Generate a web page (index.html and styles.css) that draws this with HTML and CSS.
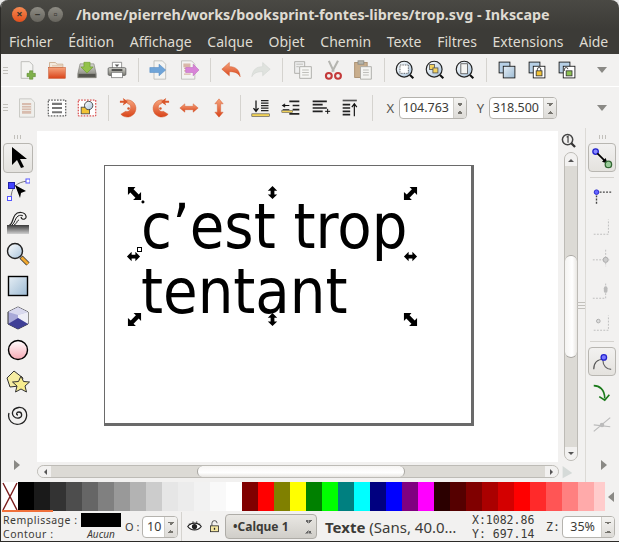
FILE: index.html
```html
<!DOCTYPE html>
<html lang="fr">
    <head>
        <meta charset="UTF-8" />
        <title>trop.svg - Inkscape</title>
        <link rel="stylesheet" href="styles.css">
    </head>
    <body>
        <!-- Shared gradients -->
        <svg class="defs" width="0" height="0">
            <defs>
                <linearGradient id="orange" x1="0" y1="0" x2="0" y2="1"><stop offset="0" stop-color="#f6a47c"/><stop offset="1" stop-color="#d9441a"/></linearGradient>
                <linearGradient id="glass" x1="0" y1="0" x2="1" y2="1"><stop offset="0" stop-color="#fff"/><stop offset="1" stop-color="#a9c4dc"/></linearGradient>
                <linearGradient id="rect" x1="0" y1="0" x2="1" y2="1"><stop offset="0" stop-color="#e6eef5"/><stop offset="1" stop-color="#9dbbd4"/></linearGradient>
                <linearGradient id="pink" x1="0" y1="0" x2="0" y2="1"><stop offset="0" stop-color="#fff"/><stop offset="1" stop-color="#f7a9b4"/></linearGradient>
                <linearGradient id="grey" x1="0" y1="0" x2="0" y2="1"><stop offset="0" stop-color="#3a3a3a"/><stop offset="1" stop-color="#cfcfcf"/></linearGradient>
                <linearGradient id="disk" x1="0" y1="0" x2="0" y2="1"><stop offset="0" stop-color="#d8d8d2"/><stop offset="1" stop-color="#77776f"/></linearGradient>
            </defs>
        </svg>

        <div class="window">
            <!-- Title bar -->
            <div class="titlebar">
                <div class="controls">
                    <span class="ctl ctl-close">×</span>
                    <span class="ctl">–</span>
                    <span class="ctl">▫</span>
                </div>
                <div class="title">/home/pierreh/works/booksprint-fontes-libres/trop.svg - Inkscape</div>
            </div>

            <!-- Menu -->
            <div class="menubar">
                <span>Fichier</span><span>Édition</span><span>Affichage</span><span>Calque</span><span>Objet</span><span>Chemin</span><span>Texte</span><span>Filtres</span><span>Extensions</span><span>Aide</span>
            </div>

            <!-- Command toolbar -->
            <div class="toolbar toolbar-top">
                <span class="grip"></span>
                <span class="btn"><svg viewBox="0 0 24 24"><path d="M5 2h10l4 4v16H5z" fill="#f4f4f2" stroke="#b5b5b0"/><circle cx="17" cy="18" r="5" fill="#fff" opacity=".6"/><path d="M15 13h4v3h3v4h-3v3h-4v-3h-3v-4h3z" fill="#7fb04a" stroke="#5d8a30" stroke-width=".7"/></svg></span>
                <span class="btn"><svg viewBox="0 0 24 24"><path d="M3 6V3h7l2 2h7v4H3z" fill="#f3e9dc" stroke="#c9a98a"/><path d="M6 7h12" stroke="#d9b79c"/><rect x="2" y="9" width="20" height="13" fill="url(#orange)" stroke="#c24a1e" stroke-width=".6"/></svg></span>
                <span class="btn"><svg viewBox="0 0 26 24"><path d="M4 4h18l3 13v5H1v-5z" fill="url(#disk)" stroke="#6d6d66" stroke-width=".7"/><rect x="2" y="17" width="22" height="4" fill="#55554f"/><path d="M9 2h8v6h4l-8 8-8-8h4z" fill="#93c24a" stroke="#6a9a2a" stroke-width=".8"/></svg></span>
                <span class="btn"><svg viewBox="0 0 26 24"><path d="M7 2h12v8H7z" fill="#fff" stroke="#777"/><rect x="1.500" y="9" width="23" height="10" rx="1.500" fill="url(#disk)" stroke="#555"/><rect x="6" y="15" width="14" height="7" fill="#fff" stroke="#777"/><path d="M10 5h6l-3 3z" fill="#555"/><rect x="6" y="11" width="14" height="2" fill="#333"/></svg></span>
                <span class="sep"></span>
                <span class="btn"><svg viewBox="0 0 24 24"><path d="M6 1h10l4 4v18H6z" fill="#f4f4f2" stroke="#b9b9b4"/><path d="M1 9h11V5l8 7-8 7v-4H1z" fill="#6fa4d8" stroke="#4f86c0" stroke-width=".6"/></svg></span>
                <span class="btn"><svg viewBox="0 0 24 24"><path d="M3 1h12l4 4v18H3z" fill="#f4f4f2" stroke="#b9b9b4"/><path d="M6 5h7v3H6zM6 10h7M6 13h5M6 17h8" stroke="#d8b6a6" stroke-width="1.500" fill="#d8b6a6"/><path d="M8 9h9V5l7 7-7 7v-4H8z" fill="#d884d8" stroke="#b95fb9" stroke-width=".6"/></svg></span>
                <span class="sep"></span>
                <span class="btn"><svg viewBox="0 0 24 24"><path d="M1 11 10 3v5c7 0 12 3 13 12-3-5-7-6-13-6v5z" fill="url(#orange)" stroke="#d2562a" stroke-width=".6"/></svg></span>
                <span class="btn"><svg viewBox="0 0 24 24"><path d="M23 11 14 3v5C7 8 2 11 1 20c3-5 7-6 13-6v5z" fill="#dfe2de" stroke="#cfd2ce" stroke-width=".6"/></svg></span>
                <span class="sep"></span>
                <span class="btn"><svg viewBox="0 0 24 24"><path d="M2 2h12v14H2z" fill="#eee" stroke="#a5a5a0"/><path d="M8 8h14v14H8z" fill="#f6f6f4" stroke="#a5a5a0"/><path d="M11 12h8M11 15h8M11 18h8" stroke="#b5b5b0"/><path d="M4 5h8M4 8h3" stroke="#b5b5b0"/></svg></span>
                <span class="btn"><svg viewBox="0 0 24 24"><path d="M7 1l6 13M18 1l-7 13" stroke="#b5b5b0" stroke-width="2.500" fill="none"/><circle cx="7" cy="19" r="3.500" fill="none" stroke="#c43a3a" stroke-width="2.500"/><circle cx="18" cy="19" r="3.500" fill="none" stroke="#c43a3a" stroke-width="2.500"/></svg></span>
                <span class="btn"><svg viewBox="0 0 24 24"><rect x="2" y="3" width="15" height="18" fill="#c9ae8d" stroke="#a58a6a"/><rect x="6" y="1" width="7" height="4" fill="#b8b8b0" stroke="#8a8a84"/><path d="M9 8h13v15H9z" fill="#f4f4f2" stroke="#a5a5a0"/><path d="M12 12h7M12 15h7M12 18h7" stroke="#b5b5b0"/></svg></span>
                <span class="sep"></span>
                <span class="btn"><svg viewBox="0 0 24 24"><circle cx="11" cy="11" r="9.500" fill="url(#glass)" stroke="#222" stroke-width="1.400"/><rect x="6" y="6" width="10" height="10" fill="#fff" stroke="#333" stroke-dasharray="1 1"/><path d="M18 18l4 4" stroke="#111" stroke-width="2.500"/></svg></span>
                <span class="btn"><svg viewBox="0 0 24 24"><circle cx="11" cy="11" r="9.500" fill="url(#glass)" stroke="#222" stroke-width="1.400"/><rect x="5.500" y="5.500" width="6" height="6" fill="#f4d35e" stroke="#555"/><rect x="9.500" y="9.500" width="6" height="6" fill="#f4d35e" stroke="#555"/><path d="M18 18l4 4" stroke="#111" stroke-width="2.500"/></svg></span>
                <span class="btn"><svg viewBox="0 0 24 24"><circle cx="11" cy="11" r="9.500" fill="url(#glass)" stroke="#222" stroke-width="1.400"/><rect x="7" y="4.500" width="8" height="12" fill="#f4f4f2" stroke="#555"/><path d="M18 18l4 4" stroke="#111" stroke-width="2.500"/></svg></span>
                <span class="sep"></span>
                <span class="btn"><svg viewBox="0 0 24 24"><rect x="2.500" y="2.500" width="13" height="13" fill="#b7d0e6" stroke="#111"/><rect x="7.500" y="7.500" width="14" height="14" fill="url(#rect)" stroke="#111"/></svg></span>
                <span class="btn"><svg viewBox="0 0 24 24"><rect x="2.500" y="2.500" width="13" height="13" fill="#b7d0e6" stroke="#111"/><rect x="7.500" y="7.500" width="14" height="14" fill="#fff" stroke="#111"/><rect x="11" y="13" width="7" height="6" fill="#f2c335" stroke="#333"/><path d="M12.500 13v-2a2 2 0 0 1 4 0v2" fill="none" stroke="#333"/></svg></span>
                <span class="btn"><svg viewBox="0 0 24 24"><rect x="2.500" y="2.500" width="13" height="13" fill="#b7d0e6" stroke="#111"/><rect x="7.500" y="7.500" width="14" height="14" fill="#fff" stroke="#111"/><rect x="11" y="13" width="7" height="6" fill="#8cc152" stroke="#333"/><path d="M9 13v-2a2 2 0 0 1 4 0" fill="none" stroke="#333"/></svg></span>
                <span class="more"></span>
            </div>

            <!-- Text tool controls -->
            <div class="toolbar toolbar-align">
                <span class="grip"></span>
                <span class="btn"><svg viewBox="0 0 24 24"><path d="M3 1h14l4 4v18H3z" fill="#efefec" stroke="#c3c3be"/><path d="M6 6h11v13H6z" fill="#d8bcae"/><path d="M6 9h11M6 12h11M6 15h11" stroke="#efefec"/></svg></span>
                <span class="btn"><svg viewBox="0 0 24 24"><rect x="1.500" y="2.500" width="21" height="19" fill="#fff" stroke="#111" stroke-dasharray="2 1.500"/><path d="M6 7h12M6 12h12M6 17h12" stroke="#777" stroke-width="2.500"/></svg></span>
                <span class="btn"><svg viewBox="0 0 24 24"><rect x="1.500" y="2.500" width="21" height="19" fill="#fff" stroke="#c00" stroke-dasharray="2 1.500"/><rect x="5" y="11" width="10" height="8" fill="#f2c335" stroke="#444"/><circle cx="14" cy="9" r="5" fill="url(#glass)" stroke="#333"/></svg></span>
                <span class="sep sep-tall"></span>
                <span class="btn btn-big"><svg viewBox="0 0 24 24"><path d="M5 2l6 4-6 4 1-3H2V5h4z" fill="#d9562a"/><path d="M9 4a9 9 0 1 1-6 15l5-3a4 4 0 1 0 2-8z" fill="url(#orange)" stroke="#d2562a" stroke-width=".5"/><circle cx="11" cy="13" r="1.300" fill="#d2562a"/></svg></span>
                <span class="btn btn-big"><svg viewBox="0 0 24 24"><path d="M19 2l-6 4 6 4-1-3h4V5h-4z" fill="#d9562a"/><path d="M15 4a9 9 0 1 0 6 15l-5-3a4 4 0 1 1-2-8z" fill="url(#orange)" stroke="#d2562a" stroke-width=".5"/><circle cx="13" cy="13" r="1.300" fill="#d2562a"/></svg></span>
                <span class="btn"><svg viewBox="0 0 24 24"><path d="M1 12l6-5v3h10V7l6 5-6 5v-3H7v3z" fill="url(#orange)" stroke="#d2562a" stroke-width=".5"/></svg></span>
                <span class="btn"><svg viewBox="0 0 24 24"><path d="M12 1l5 6h-3v10h3l-5 6-5-6h3V7H7z" fill="url(#orange)" stroke="#d2562a" stroke-width=".5"/></svg></span>
                <span class="sep sep-tall"></span>
                <span class="btn"><svg viewBox="0 0 24 24"><path d="M6 3v12M3 12l3 4 3-4" stroke="#111" stroke-width="1.500" fill="none"/><path d="M12 3h9M12 6h9M12 9h9M12 12h9M12 15h9" stroke="#222" stroke-width="1.500"/><rect x="1" y="19" width="21" height="3" fill="#f2d35a" stroke="#444" stroke-width=".7"/></svg></span>
                <span class="btn"><svg viewBox="0 0 24 24"><path d="M2 9h8M2 14h8M5 7L2 9l3 2" stroke="#111" stroke-width="1.300" fill="none"/><path d="M10 4h12M14 9h8M14 14h8M10 19h12" stroke="#222" stroke-width="2"/><rect x="1" y="15" width="13" height="2.500" fill="#f2d35a" stroke="#444" stroke-width=".6"/></svg></span>
                <span class="btn"><svg viewBox="0 0 24 24"><path d="M2 4h17M2 8h12M2 12h17M2 16h12" stroke="#222" stroke-width="2"/><path d="M17 16h6M20 13v6" stroke="#111" stroke-width="1.200"/></svg></span>
                <span class="btn"><svg viewBox="0 0 24 24"><rect x="2" y="2" width="17" height="2" fill="#555"/><path d="M2 8h9M2 12h9M2 16h9M2 20h9" stroke="#222" stroke-width="2"/><path d="M16 22V8M13 11l3-4 3 4" stroke="#111" stroke-width="1.400" fill="none"/></svg></span>
                <span class="sep sep-tall"></span>
                <label class="coord-label">X</label>
                <span class="spin spin-x"><span class="spin-value">104.763</span><span class="spin-arrows"></span></span>
                <label class="coord-label coord-label-y">Y</label>
                <span class="spin spin-y"><span class="spin-value">318.500</span><span class="spin-arrows"></span></span>
                <span class="more"></span>
            </div>

            <!-- Work area -->
            <div class="workspace">
                <div class="toolbox">
                    <span class="grip-h"></span>
                    <span class="tool tool-on"><svg viewBox="0 0 24 24"><path d="M6 1v18l5-5 4 8 3-1-4-8h7z" fill="#000"/></svg></span>
                    <span class="tool"><svg viewBox="0 0 24 24"><path d="M5 21C5 10 10 4 22 3" fill="none" stroke="#777"/><rect x="1.500" y="18.500" width="4" height="4" fill="#fff" stroke="#55f"/><rect x="20" y="1" width="4" height="4" fill="#fff" stroke="#55f"/><rect x="2.500" y="4.500" width="6" height="6" fill="#44f" stroke="#22a"/><path d="M9 7l11 6-5 2-1 5z" fill="#000"/></svg></span>
                    <span class="tool"><svg viewBox="0 0 24 24"><path d="M2 16c5-1 4-7 7-11 3-4 10-3 11 1 1 3-4 5-5 1" fill="none" stroke="#222" stroke-width="1.200"/><path d="M6 15c3-2 3-7 6-9 2-1 4-1 5 0" fill="none" stroke="#222"/><path d="M8 15c4-2 2-4 5-5" fill="none" stroke="#222"/><path d="M1 15h22v9H1z" fill="url(#grey)"/></svg></span>
                    <span class="tool"><svg viewBox="0 0 24 24"><circle cx="9" cy="9" r="7.500" fill="url(#glass)" stroke="#222" stroke-width="1.400"/><path d="M15 15l7 7" stroke="#333" stroke-width="4.500"/><path d="M15.500 15.500l6.500 6.500" stroke="#f0a830" stroke-width="3"/></svg></span>
                    <span class="tool"><svg viewBox="0 0 24 24"><rect x="2.500" y="2.500" width="19" height="19" fill="url(#rect)" stroke="#000" stroke-width="1.400"/></svg></span>
                    <span class="tool"><svg viewBox="0 0 24 24"><path d="M12 1l10 5v12l-10 5-10-5V6z" fill="#a9a9d8" stroke="#333"/><path d="M2 6l10-5 10 5-10 3z" fill="#d9d9ee"/><path d="M12 9l10-3v12l-10-6z" fill="#eeeef7"/><path d="M12 12l10 6-10 5-10-5z" fill="#3f3f96"/></svg></span>
                    <span class="tool"><svg viewBox="0 0 24 24"><circle cx="12" cy="12" r="9.500" fill="url(#pink)" stroke="#000" stroke-width="1.400"/></svg></span>
                    <span class="tool"><svg viewBox="0 0 24 24"><path d="M8 1L1 8l3 9 9-1 4-8z" fill="#f6eda2" stroke="#333"/><path d="M15 6l2.500 5.500 6 .5-4.500 4 1.500 6-5.500-3-5.500 3 1.500-6-4.500-4 6-.5z" fill="#f7ec8e" stroke="#333"/></svg></span>
                    <span class="tool"><svg viewBox="0 0 24 24"><path d="M12 13c-2 0-2-3 1-3s4 5 0 6-8-3-6-7 9-5 12-1 2 12-5 14-13-4-11-11" fill="none" stroke="#222" stroke-width="1.300"/></svg></span>
                    <span class="tool-more"></span>
                </div>

                <div class="center">
                    <div class="center-top">
                        <div class="canvas">
                            <div class="page">
                                <div class="drawing">c’est trop<br />tentant</div>
                                <!-- Selection handles -->
                                <svg class="handle h-tl" viewBox="0 0 16 16"><path d="M1 1h8L7 3.500 12.500 9 15 6.500V15H6.500L9 12.500 3.500 7 1 9.500zM17 15l2 2-2 2-2-2z"/></svg>
                                <svg class="handle h-t" viewBox="0 0 16 16"><path d="M8 1l5 5h-3v4h3l-5 5-5-5h3V6H3z"/></svg>
                                <svg class="handle h-tr" viewBox="0 0 16 16"><path d="M15 1H7l2.500 2.500L4 9 1 6.500V15h8.500L7 12.500 12.500 7l2.500 2.500z"/></svg>
                                <svg class="handle h-l" viewBox="0 0 16 16"><path d="M1 8l5-5v3h4V3l5 5-5 5v-3H6v3z"/></svg>
                                <svg class="handle h-r" viewBox="0 0 16 16"><path d="M1 8l5-5v3h4V3l5 5-5 5v-3H6v3z"/></svg>
                                <svg class="handle h-bl" viewBox="0 0 16 16"><path d="M15 1H7l2.500 2.500L4 9 1 6.500V15h8.500L7 12.500 12.500 7l2.500 2.500z"/></svg>
                                <svg class="handle h-b" viewBox="0 0 16 16"><path d="M8 1l5 5h-3v4h3l-5 5-5-5h3V6H3z"/></svg>
                                <svg class="handle h-br" viewBox="0 0 16 16"><path d="M1 1h8L7 3.500 12.500 9 15 6.500V15H6.500L9 12.500 3.500 7 1 9.500z"/></svg>
                                <span class="origin"></span>
                            </div>
                        </div>
                        <div class="vside">
                            <svg class="zoom-one" viewBox="0 0 16 16"><circle cx="7" cy="7" r="5.500" fill="#f2f1f0" stroke="#444" stroke-width="1.600"/><path d="M6 4.500l1.500-1v7" fill="none" stroke="#444" stroke-width="1.300"/><path d="M11 11l4 4" stroke="#333" stroke-width="2.400"/></svg>
                            <div class="vscroll">
                                <span class="step step-up"></span>
                                <div class="vtrack"><span class="vthumb"></span></div>
                                <span class="step step-down"></span>
                            </div>
                        </div>
                        <span class="grip-v"></span>
                    </div>
                    <div class="center-bottom">
                        <div class="hscroll">
                            <span class="step step-left"></span>
                            <div class="htrack"><span class="hthumb"></span></div>
                            <span class="step step-right"></span>
                        </div>
                        <svg class="cms" viewBox="0 0 16 16"><path d="M3 1l11 8-11 6z" fill="#d5dad8"/></svg>
                    </div>
                </div>

                <div class="snapbar">
                    <span class="grip-h"></span>
                    <span class="snap snap-on"><svg viewBox="0 0 24 24"><circle cx="5" cy="5" r="3" fill="#88f" stroke="#22c" stroke-width="1.400"/><path d="M7 7l9 9" stroke="#000" stroke-width="1.800"/><path d="M18 18l-6-2 4-4z"/><circle cx="19" cy="19" r="3.500" fill="#9c9" stroke="#363" stroke-width="1.400"/></svg></span>
                    <span class="rule"></span>
                    <span class="snap"><svg viewBox="0 0 24 24"><path d="M6 10h16M6 10v14" stroke="#444" stroke-width="1.500" stroke-dasharray="2 1.500"/><circle cx="6" cy="10" r="2.500" fill="#66f" stroke="#22c"/></svg></span>
                    <span class="snap"><svg viewBox="0 0 24 24"><path d="M3 21h16V5" fill="none" stroke="#bbb" stroke-dasharray="2 1.500"/></svg></span>
                    <span class="snap"><svg viewBox="0 0 24 24"><path d="M2 14h18M16 3v18" stroke="#bbb" stroke-dasharray="2 1.500"/><circle cx="16" cy="14" r="2.800" fill="#ccc" stroke="#aaa"/></svg></span>
                    <span class="snap"><svg viewBox="0 0 24 24"><path d="M2 21h14V4" fill="none" stroke="#bbb" stroke-dasharray="2 1.500"/><rect x="14" y="8" width="4" height="7" rx="2" fill="#bbb"/></svg></span>
                    <span class="snap"><svg viewBox="0 0 24 24"><path d="M3 21h16V5" fill="none" stroke="#bbb" stroke-dasharray="2 1.500"/><circle cx="8" cy="11" r="2" fill="#ddd" stroke="#aaa"/></svg></span>
                    <span class="rule rule-low"></span>
                    <span class="snap snap-on"><svg viewBox="0 0 24 24"><path d="M3 20C3 12 8 9 14 9" fill="none" stroke="#555" stroke-width="1.300"/><path d="M13 10c0 6 4 10 9 10" fill="none" stroke="#666" stroke-width="1.300"/><circle cx="14" cy="7" r="3" fill="#77f" stroke="#22c" stroke-width="1.400"/></svg></span>
                    <span class="snap"><svg viewBox="0 0 24 24"><path d="M3 5c6 0 12 4 12 14" fill="none" stroke="#1a7a1a" stroke-width="1.800"/><path d="M9 17l6 4 5-6" fill="none" stroke="#1a7a1a" stroke-width="1.800"/></svg></span>
                    <span class="snap"><svg viewBox="0 0 24 24"><path d="M3 20L21 5M3 13l18 2" fill="none" stroke="#bbb" stroke-width="1.300"/><circle cx="12" cy="13" r="2.500" fill="#bbb"/></svg></span>
                    <span class="tool-more tool-more-right"></span>
                </div>
            </div>

            <!-- Palette -->
            <div class="palette">
                <span class="swatch swatch-none"><svg viewBox="0 0 16 30" preserveAspectRatio="none"><path d="M1 1l14 28M15 1L1 29" stroke="#7a1c1c" stroke-width="1.400"/></svg></span>
                <span class="swatch" style="background:#000"></span>
                <span class="swatch" style="background:#1a1a1a"></span>
                <span class="swatch" style="background:#333"></span>
                <span class="swatch" style="background:#4d4d4d"></span>
                <span class="swatch" style="background:#666"></span>
                <span class="swatch" style="background:#808080"></span>
                <span class="swatch" style="background:#999"></span>
                <span class="swatch" style="background:#b3b3b3"></span>
                <span class="swatch" style="background:#ccc"></span>
                <span class="swatch" style="background:#e6e6e6"></span>
                <span class="swatch" style="background:#ececec"></span>
                <span class="swatch" style="background:#f2f2f2"></span>
                <span class="swatch" style="background:#f9f9f9"></span>
                <span class="swatch" style="background:#fff"></span>
                <span class="swatch" style="background:#800000"></span>
                <span class="swatch" style="background:#f00"></span>
                <span class="swatch" style="background:#808000"></span>
                <span class="swatch" style="background:#ff0"></span>
                <span class="swatch" style="background:#008000"></span>
                <span class="swatch" style="background:#0f0"></span>
                <span class="swatch" style="background:#008080"></span>
                <span class="swatch" style="background:#0ff"></span>
                <span class="swatch" style="background:#000080"></span>
                <span class="swatch" style="background:#00f"></span>
                <span class="swatch" style="background:#800080"></span>
                <span class="swatch" style="background:#f0f"></span>
                <span class="swatch" style="background:#2b0000"></span>
                <span class="swatch" style="background:#500"></span>
                <span class="swatch" style="background:#800000"></span>
                <span class="swatch" style="background:#a00"></span>
                <span class="swatch" style="background:#d40000"></span>
                <span class="swatch" style="background:#f00"></span>
                <span class="swatch" style="background:#ff2a2a"></span>
                <span class="swatch" style="background:#f55"></span>
                <span class="swatch" style="background:#ff8080"></span>
                <span class="swatch" style="background:#faa"></span>
                <span class="swatch swatch-last" style="background:#fcc"></span>
                <span class="palette-menu"></span>
            </div>

            <!-- Status bar -->
            <div class="statusbar">
                <div class="fillstroke">
                    <span class="fs-label">Remplissage :</span>
                    <span class="fs-fill"></span>
                    <span class="fs-label">Contour :</span>
                    <span class="fs-none">Aucun</span>
                </div>
                <span class="opacity-label">O :</span>
                <span class="spin spin-o"><span class="spin-value">10</span><span class="spin-arrows"></span></span>
                <span class="divider"></span>
                <svg class="status-icon" viewBox="0 0 20 16"><path d="M1 8c4-6 14-6 18 0-4 6-14 6-18 0z" fill="#fff" stroke="#222" stroke-width="1.500"/><circle cx="10" cy="8" r="3.500" fill="#222"/><path d="M3 4l2 2M8 1v3M13 1v3M17 4l-2 2" stroke="#222"/></svg>
                <svg class="status-icon status-lock" viewBox="0 0 20 20"><rect x="4" y="9" width="12" height="9" fill="#f4e6a0" stroke="#222" stroke-width="1.200"/><path d="M6 9V5a4 4 0 0 1 8 0" fill="none" stroke="#444" stroke-width="1.400"/><rect x="9" y="12" width="2" height="3" fill="#222"/></svg>
                <span class="layer">•Calque 1<span class="layer-arrows"></span></span>
                <span class="status-text"><b>Texte</b> (Sans, 40.0…</span>
                <span class="coords"><span>X:1082.86</span><span>Y: 697.14</span></span>
                <span class="zoom-label">Z:</span>
                <span class="spin spin-z"><span class="spin-value">35%</span><span class="spin-arrows"></span></span>
            </div>
        </div>
    </body>
</html>
```

FILE: styles.css
```css
* {
    margin: 0;
    padding: 0;
    box-sizing: border-box;
}
html, body {
    width: 619px;
    height: 542px;
    overflow: hidden;
    background: #e8e8e8;
}
body {
    font-family: "Noto Sans", sans-serif;
    color: #3c3b37;
}
.defs {
    display: block;
    position: absolute;
}
svg {
    display: block;
}
.window {
    width: 619px;
    height: 542px;
    display: flex;
    flex-direction: column;
    background-color: #f2f1f0;
    border-left: 1px solid #2c2b28;
    border-bottom: 1px solid #2c2b28;
    border-radius: 8px 8px 0 0;
    overflow: hidden;
}
/* Title bar */
.titlebar {
    height: 29px;
    flex: none;
    display: flex;
    align-items: center;
    background: linear-gradient(#4a4944, #3c3b37);
    padding-left: 11px;
}
.controls {
    display: flex;
    gap: 3px;
    width: 64px;
}
.ctl {
    width: 15px;
    height: 15px;
    border-radius: 50%;
    background: linear-gradient(#8e8c84, #66645d);
    color: #36352f;
    font-size: 11px;
    line-height: 14px;
    text-align: center;
    font-weight: 700;
}
.ctl-close {
    background: linear-gradient(#f58a52, #e2501d);
}
.title {
    color: #dfdbd2;
    font-size: 14.300px;
    font-weight: 700;
    white-space: nowrap;
}
/* Menu */
.menubar {
    height: 25px;
    flex: none;
    display: flex;
    align-items: center;
    gap: 15.700px;
    padding-left: 8px;
    background-color: #3c3b37;
    color: #dfdbd2;
    font-size: 14px;
    white-space: nowrap;
}
/* Toolbars */
.toolbar {
    flex: none;
    display: flex;
    align-items: center;
    padding-left: 2px;
}
.toolbar-top {
    height: 33px;
    border-bottom: 1px solid #fff;
}
.toolbar-align {
    height: 41px;
}
.grip {
    width: 5px;
    height: 7px;
    margin-right: 4px;
    flex: none;
    background: repeating-linear-gradient(#c2c0bb 0 1px, transparent 1px 3px);
}
.btn {
    width: 30px;
    height: 24px;
    display: flex;
    align-items: center;
    justify-content: center;
}
.btn svg {
    width: 20px;
    height: 20px;
}
.btn-big svg {
    width: 23px;
    height: 23px;
}
.sep {
    width: 12px;
    height: 24px;
    background: linear-gradient(#d5d3cf, #d5d3cf) center / 1px 100% no-repeat;
}
.sep-tall {
    height: 26px;
}
.more {
    width: 0;
    height: 0;
    margin-left: auto;
    margin-right: 12px;
    border-left: 5px solid transparent;
    border-right: 5px solid transparent;
    border-top: 6px solid #8a8985;
}
.coord-label {
    width: 18px;
    text-align: right;
    padding-right: 2px;
    font-size: 13px;
    color: #55534e;
}
.coord-label-y {
    width: 19px;
}
/* Spin boxes */
.spin {
    display: flex;
    height: 22px;
    border: 1px solid #b5b3ae;
    border-radius: 4px;
    background-color: #fff;
    overflow: hidden;
    margin-left: 3px;
    font-size: 12.500px;
}
.spin-x, .spin-y {
    width: 68px;
}
.spin-value {
    flex: 1;
    text-align: right;
    padding-right: 4px;
    line-height: 20px;
    white-space: nowrap;
    overflow: hidden;
}
.spin-arrows {
    width: 13px;
    flex: none;
    border-left: 1px solid #cfcdc8;
    background:
        linear-gradient(45deg, transparent 50%, #77756f 50%) 3px 5px / 3px 3px no-repeat,
        linear-gradient(-45deg, transparent 50%, #77756f 50%) 6px 5px / 3px 3px no-repeat,
        linear-gradient(135deg, transparent 50%, #77756f 50%) 3px 13px / 3px 3px no-repeat,
        linear-gradient(-135deg, transparent 50%, #77756f 50%) 6px 13px / 3px 3px no-repeat,
        linear-gradient(#f4f3f1, #dddbd7);
}
/* Work area */
.workspace {
    height: 354px;
    flex: none;
    display: flex;
}
.toolbox {
    width: 36px;
    flex: none;
    display: flex;
    flex-direction: column;
    align-items: flex-start;
    padding: 7px 0 0 2px;
}
.grip-h {
    width: 8px;
    height: 4px;
    margin: 0 0 4px 11px;
    flex: none;
    background: repeating-linear-gradient(90deg, #c2c0bb 0 1px, transparent 1px 3px);
}
.tool {
    width: 30px;
    height: 32px;
    flex: none;
    display: flex;
    align-items: center;
    justify-content: center;
}
.tool svg {
    width: 24px;
    height: 24px;
}
.tool-on {
    height: 30px;
    margin-bottom: 1px;
    background: linear-gradient(#f2f1f0, #e4e2de);
    border: 1px solid #b8b6b1;
    border-radius: 4px;
}
.tool-more {
    width: 0;
    height: 0;
    margin: auto 0 12px 11px;
    border-top: 5px solid transparent;
    border-bottom: 5px solid transparent;
    border-left: 6px solid #8a8985;
}
.tool-more-right {
    margin: auto 0 12px 13px;
}
.center {
    width: 548px;
    flex: none;
    display: flex;
    flex-direction: column;
    padding-top: 3px;
}
.center-top {
    height: 331px;
    flex: none;
    display: flex;
}
.canvas {
    width: 521px;
    flex: none;
    background-color: #fff;
    padding: 34px 0 0 67px;
}
.page {
    position: relative;
    width: 370px;
    height: 261px;
    border: 1px solid #6a6a6a;
    border-right-width: 3px;
    border-bottom-width: 3px;
    padding: 28px 0 0 36px;
    background-color: #fff;
}
.drawing {
    font-family: "DejaVu Sans", sans-serif;
    font-stretch: condensed;
    color: #000;
    font-size: 62.500px;
    line-height: 65px;
    white-space: nowrap;
}
.handle {
    position: absolute;
    width: 15px;
    height: 15px;
    fill: #000;
    overflow: visible;
}
.h-tl { left: 22px; top: 20px; }
.h-t { left: 160px; top: 19px; }
.h-tr { left: 298px; top: 20px; }
.h-l { left: 21px; top: 83px; }
.h-r { left: 298px; top: 83px; }
.h-bl { left: 22px; top: 146px; }
.h-b { left: 160px; top: 146px; }
.h-br { left: 298px; top: 146px; }
.origin {
    position: absolute;
    left: 32px;
    top: 81px;
    width: 5px;
    height: 5px;
    border: 1px solid #000;
    background-color: #fff;
}
.vside {
    width: 19px;
    flex: none;
    display: flex;
    flex-direction: column;
    align-items: center;
    padding-top: 2px;
}
.zoom-one {
    width: 15px;
    height: 15px;
    margin-bottom: 4px;
    margin-left: 2px;
}
.vscroll, .hscroll {
    display: flex;
    background-color: #dcdad5;
    border: 1px solid #bdbbb6;
    overflow: hidden;
}
.vscroll {
    margin-left: 6px;
    width: 14px;
    height: 309px;
    flex: none;
    flex-direction: column;
    border-radius: 7px;
}
.vtrack {
    flex: 1;
    padding-top: 89px;
}
.vthumb {
    display: block;
    height: 103px;
    background: linear-gradient(90deg, #f4f3f1, #fff 60%, #e8e6e2);
    border: 1px solid #a8a6a1;
    border-width: 1px 0;
    border-radius: 6px;
}
.step {
    flex: none;
    background-color: #f2f1f0;
    display: block;
    position: relative;
}
.step-up, .step-down {
    height: 13px;
}
.step::after {
    content: "";
    position: absolute;
    left: 50%;
    top: 50%;
    width: 0;
    height: 0;
    transform: translate(-50%, -50%);
    border: 3px solid transparent;
}
.step-up::after { border-bottom-color: #555; margin-top: -1px; }
.step-down::after { border-top-color: #555; margin-top: 1px; }
.step-left::after { border-right-color: #555; margin-left: -1px; }
.step-right::after { border-left-color: #555; margin-left: 1px; }
.grip-v {
    width: 8px;
    height: 8px;
    margin: 171px 0 0 0;
    flex: none;
    background: repeating-linear-gradient(#c2c0bb 0 1px, transparent 1px 3px);
}
.center-bottom {
    flex: 1;
    display: flex;
    align-items: flex-start;
    padding-top: 3px;
}
.hscroll {
    width: 522px;
    height: 13px;
    border-radius: 7px;
}
.step-left, .step-right {
    width: 13px;
}
.htrack {
    flex: 1;
    padding-left: 146px;
}
.hthumb {
    display: block;
    width: 208px;
    height: 100%;
    background: linear-gradient(#f6f5f3, #fff 60%, #e8e6e2);
    border: 1px solid #a8a6a1;
    border-width: 0 1px;
    border-radius: 6px;
}
.cms {
    width: 14px;
    height: 14px;
    margin-left: 1px;
}
.snapbar {
    flex: 1;
    display: flex;
    flex-direction: column;
    align-items: flex-start;
    border-left: 1px solid #dcdad6;
    padding: 7px 0 0 2px;
}
.snap {
    width: 28px;
    height: 32px;
    flex: none;
    display: flex;
    align-items: center;
    justify-content: center;
}
.snap svg {
    width: 22px;
    height: 22px;
}
.snap-on {
    height: 29px;
    background: linear-gradient(#f2f1f0, #e4e2de);
    border: 1px solid #b8b6b1;
    border-radius: 4px;
}
.rule {
    width: 24px;
    height: 1px;
    flex: none;
    margin: 5px 0 0 2px;
    background-color: #d5d3cf;
}
.rule-low {
    margin: 3px 0 5px 2px;
}
/* Palette */
.palette {
    height: 30px;
    flex: none;
    display: flex;
    padding-left: 1px;
}
.swatch {
    width: 16px;
    height: 29px;
    flex: none;
    display: block;
}
.swatch svg {
    width: 16px;
    height: 29px;
}
.swatch-none {
    position: relative;
    background-color: #fff;
}
.swatch-none::after {
    content: "";
    position: absolute;
    left: 0;
    top: 28px;
    width: 51px;
    height: 2px;
    background-color: #f0703a;
}
.swatch-last {
    width: 11px;
}
.palette-menu {
    width: 0;
    height: 0;
    margin: 10px 0 0 3px;
    border-top: 5px solid transparent;
    border-bottom: 5px solid transparent;
    border-right: 6px solid #8a8985;
}
/* Status bar */
.statusbar {
    flex: 1;
    min-height: 0;
    display: flex;
    align-items: center;
}
.fillstroke {
    width: 121px;
    flex: none;
    display: grid;
    grid-template-columns: 78px 40px;
    grid-template-rows: 14px 14px;
    padding-left: 2px;
    font-size: 10.500px;
    line-height: 14px;
    white-space: nowrap;
}
.fs-label {
    letter-spacing: .5px;
}
.fs-fill {
    background-color: #000;
}
.fs-none {
    font-style: italic;
    text-align: center;
    font-size: 10px;
}
.opacity-label {
    font-size: 11px;
    width: 17px;
    margin-left: 3px;
    white-space: nowrap;
}
.spin-o {
    width: 36px;
    margin-left: 0;
}
.spin-o .spin-value {
    text-align: left;
    padding: 0 0 0 4px;
}
.divider {
    width: 1px;
    height: 29px;
    margin: 0 5px 0 3px;
    background-color: #d5d3cf;
}
.status-icon {
    width: 15px;
    height: 13px;
    margin-right: 5px;
}
.status-lock {
    margin-right: 3px;
}
.layer {
    position: relative;
    width: 92px;
    height: 25px;
    padding-left: 7px;
    font-size: 12px;
    font-weight: 700;
    line-height: 24px;
    background: linear-gradient(#e9e7e3, #d0cec9);
    border: 1px solid #aeaca7;
    border-radius: 4px;
    white-space: nowrap;
}
.layer-arrows {
    position: absolute;
    right: 4px;
    top: 5px;
    width: 7px;
    height: 14px;
    background:
        linear-gradient(45deg, transparent 50%, #666 50%) 0 0 / 3.500px 3.500px no-repeat,
        linear-gradient(-45deg, transparent 50%, #666 50%) 3.500px 0 / 3.500px 3.500px no-repeat,
        linear-gradient(135deg, transparent 50%, #666 50%) 0 10px / 3.500px 3.500px no-repeat,
        linear-gradient(-135deg, transparent 50%, #666 50%) 3.500px 10px / 3.500px 3.500px no-repeat;
}
.status-text {
    width: 147px;
    flex: none;
    margin-left: 8px;
    font-size: 15px;
    white-space: nowrap;
}
.coords {
    width: 74px;
    flex: none;
    display: flex;
    flex-direction: column;
    font-family: "DejaVu Sans Mono", monospace;
    font-size: 11.500px;
    line-height: 14px;
    white-space: pre;
}
.zoom-label {
    font-family: "DejaVu Sans Mono", monospace;
    font-size: 11.500px;
    width: 16px;
}
.spin-z {
    width: 53px;
    margin-left: 0;
}
.spin-z .spin-value {
    padding-right: 6px;
}
```
